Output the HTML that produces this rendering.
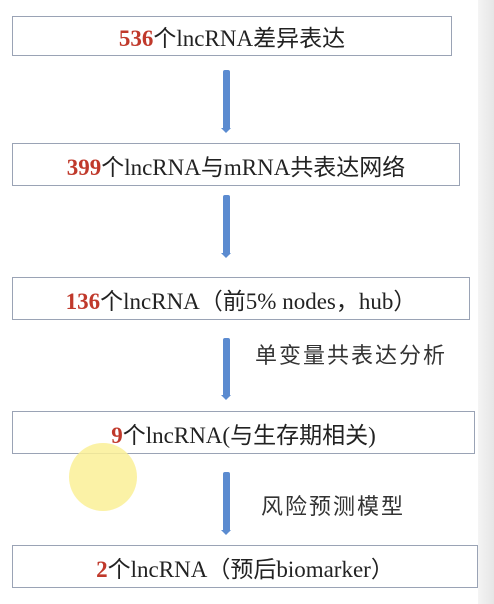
<!DOCTYPE html>
<html><head><meta charset="utf-8"><style>
body{margin:0;width:494px;height:604px;background:#fff;position:relative;overflow:hidden;font-family:"Liberation Serif","Noto Sans CJK SC",serif;}
.side{position:absolute;left:478px;top:0;width:16px;height:604px;background:linear-gradient(90deg,#f4f4f4,#e6e6e6);}
.box{position:absolute;left:12px;border:1.5px solid #9aa3b5;background:#fff;box-sizing:border-box;text-align:center;font-size:23px;color:#222;display:flex;align-items:center;justify-content:center;white-space:nowrap;}
.r{color:#c0392b;font-weight:bold;}
.a{position:absolute;left:223px;width:7px;background:#5b8bd0;border-radius:2px;}
.a:after{content:"";position:absolute;left:-2px;bottom:-3px;border-left:5.5px solid transparent;border-right:5.5px solid transparent;border-top:5px solid #5b8bd0;}
.lab{position:absolute;font-family:"Noto Sans CJK SC",sans-serif;font-size:22px;letter-spacing:2px;color:#333;}
.dot{position:absolute;left:69px;top:443px;width:68px;height:68px;border-radius:50%;background:rgba(250,240,150,.85);}
</style></head><body>
<div class="side"></div>
<div class="box" style="top:16px;width:440px;height:40px"><span><span class="r">536</span>个lncRNA差异表达</span></div>
<div class="a" style="top:70px;height:60px"></div>
<div class="box" style="top:143px;width:448px;height:43px"><span><span class="r">399</span>个lncRNA与mRNA共表达网络</span></div>
<div class="a" style="top:195px;height:60px"></div>
<div class="box" style="top:277px;width:458px;height:43px"><span><span class="r">136</span>个lncRNA（前5% nodes，hub）</span></div>
<div class="a" style="top:338px;height:59px"></div>
<div class="lab" style="left:255px;top:338px">单变量共表达分析</div>
<div class="box" style="top:411px;width:463px;height:43px"><span><span class="r">9</span>个lncRNA(与生存期相关)</span></div>
<div class="a" style="top:472px;height:60px"></div>
<div class="lab" style="left:261px;top:489px">风险预测模型</div>
<div class="box" style="top:545px;width:466px;height:43px"><span><span class="r">2</span>个lncRNA（预后biomarker）</span></div>
<div class="dot"></div>
</body></html>
